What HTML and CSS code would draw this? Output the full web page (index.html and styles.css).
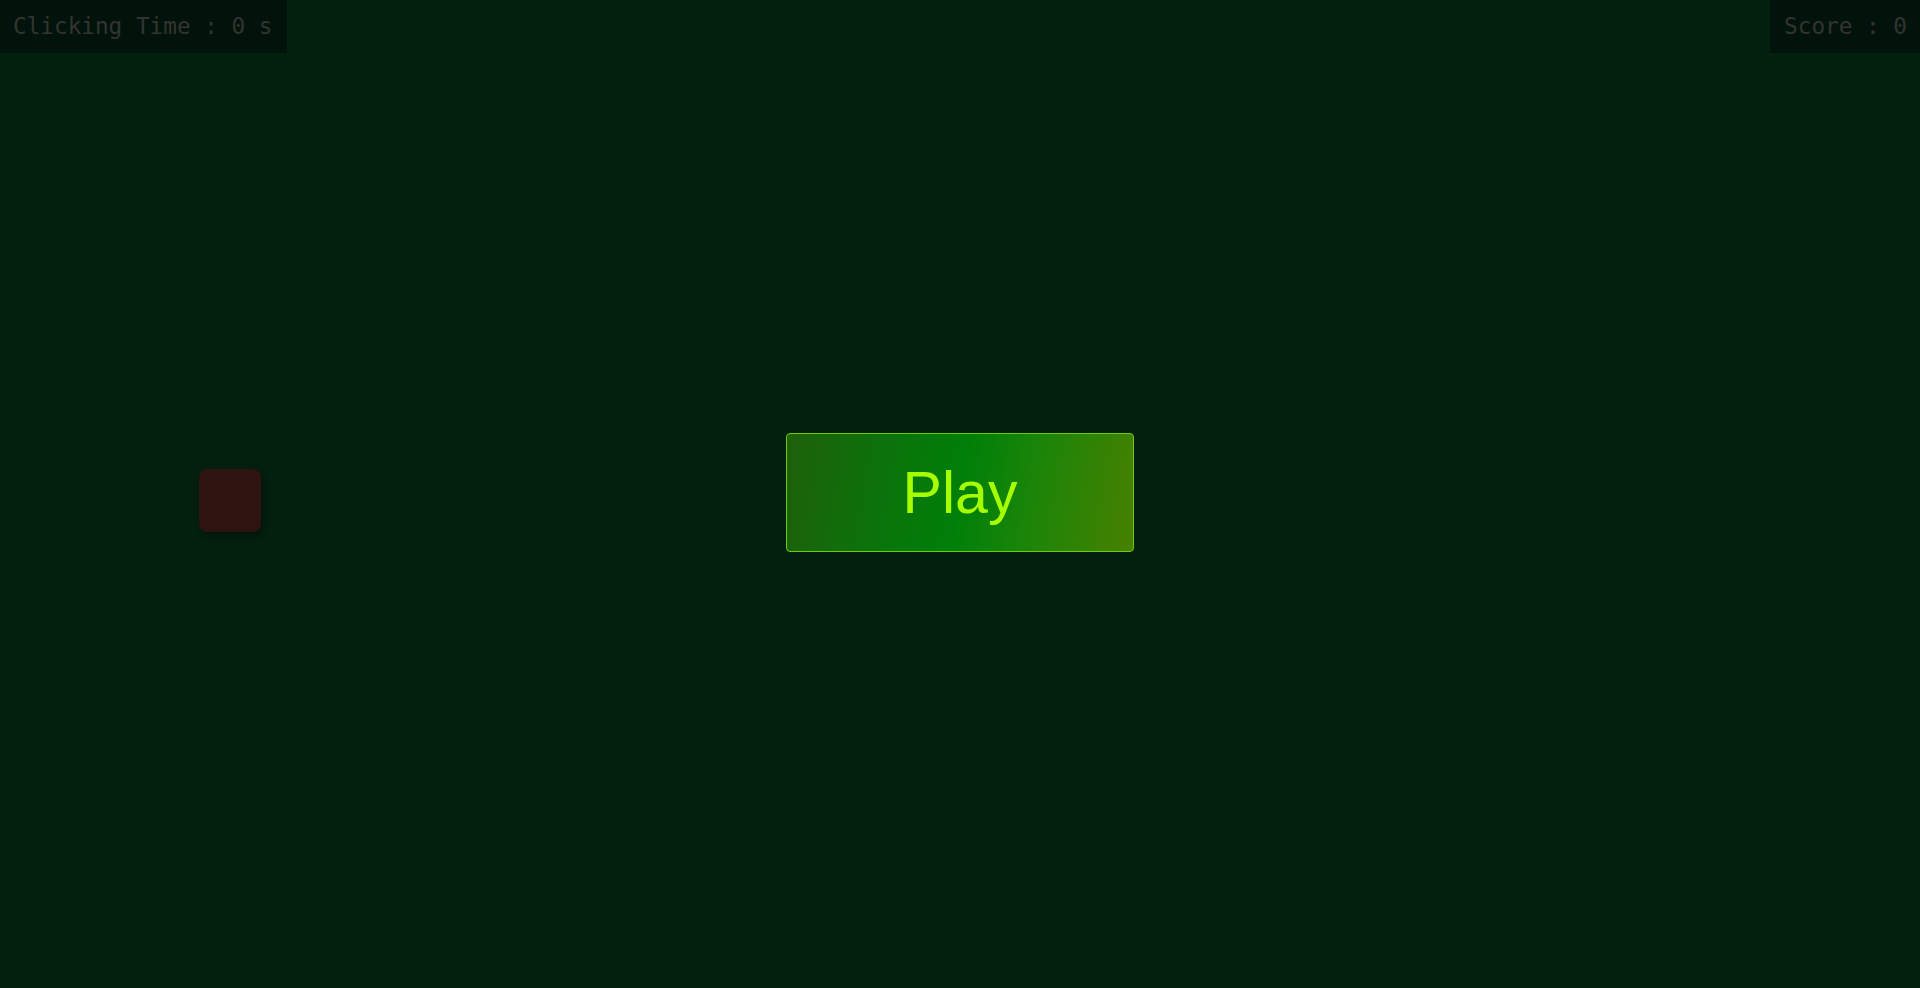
FILE: index.html
```html
<!DOCTYPE html>
<html lang="en">
<head>
<meta charset="utf-8">
<title>Click Game</title>
<link rel="stylesheet" href="styles.css">
</head>
<body>
<div class="game">
  <div class="hud">
    <div class="hud-box hud-time">Clicking Time : 0 s</div>
    <div class="hud-box hud-score">Score : 0</div>
  </div>
  <div class="stage">
    <div class="target" style="left:199px; top:469px;"></div>
    <button class="play">Play</button>
  </div>
</div>
</body>
</html>
```

FILE: styles.css
```css
html, body {
  margin: 0;
  padding: 0;
  height: 100%;
}
body {
  background: #03200f;
  overflow: hidden;
}
.game {
  display: grid;
  grid-template: 100vh / 100vw;
}
.hud, .stage {
  grid-area: 1 / 1;
}
.hud {
  display: flex;
  justify-content: space-between;
  align-items: flex-start;
  z-index: 2;
  pointer-events: none;
}
.hud-box {
  background: #01130b;
  color: #333331;
  font-family: "DejaVu Sans Mono", "Liberation Mono", monospace;
  font-size: 22.7px;
  line-height: 53px;
  height: 53px;
  padding: 0 13px;
  white-space: nowrap;
}
.hud-time {
  width: 261px;
}
.hud-score {
  padding: 0 13px 0 14px;
}
.stage {
  position: relative;
  display: flex;
  align-items: center;
  justify-content: center;
}
.target {
  position: absolute;
  width: 62px;
  height: 63px;
  border-radius: 8px;
  background: #2e1410;
  box-shadow: 2px 3px 6px rgba(0, 0, 0, 0.45);
}
.play {
  width: 348px;
  height: 119px;
  margin-top: -3px;
  box-sizing: border-box;
  border: 1px solid #6ccc0a;
  border-radius: 4px;
  background: linear-gradient(100deg, #1e600a 0%, #0a740a 30%, #007f08 50%, #1b8508 70%, #488000 100%);
  color: #a6ff00;
  font-family: "Liberation Sans", Arial, sans-serif;
  font-size: 59px;
  padding: 0;
  cursor: pointer;
}
```
